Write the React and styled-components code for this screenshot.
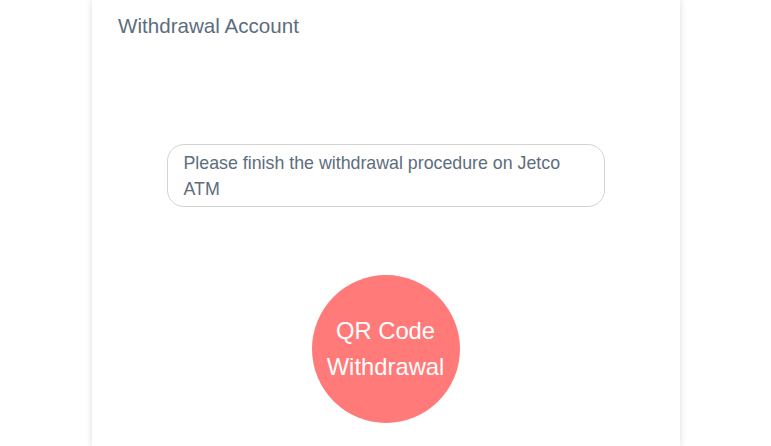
import React from "react";
import styled, { createGlobalStyle } from "styled-components";

const Global = createGlobalStyle`
  html, body { margin: 0; padding: 0; background: #ffffff; }
  body { font-family: "Liberation Sans", Arial, sans-serif; overflow: hidden; }
`;

const Page = styled.div`
  display: flex;
  justify-content: center;
  height: 446px;
  padding-left: 1px;
`;

const Card = styled.section`
  width: 588px;
  height: 100%;
  background: #ffffff;
  box-shadow: 0 0 7px rgba(0, 0, 0, 0.14);
  padding: 14px 26px 0 25px;
  box-sizing: border-box;
  display: flex;
  flex-direction: column;
  align-items: center;
`;

const Title = styled.h2`
  align-self: stretch;
  margin: 0 0 0 1px;
  font-size: 20.6px;
  font-weight: 400;
  line-height: 23px;
  color: #5d6d7d;
`;

const Notice = styled.div`
  margin-top: 107px;
  width: 438px;
  box-sizing: border-box;
  border: 1px solid #d3d3d3;
  border-radius: 17px;
  padding: 5px 16px 4px 16px;
  font-size: 17.8px;
  line-height: 26px;
  color: #5d6d7d;
`;

const QrButton = styled.button`
  margin-top: 68px;
  width: 148px;
  height: 148px;
  border-radius: 50%;
  border: none;
  background: #ff7a79;
  color: #ffffff;
  font-family: "Liberation Sans", Arial, sans-serif;
  font-size: 23.8px;
  line-height: 36px;
  display: flex;
  flex-direction: column;
  align-items: center;
  justify-content: center;
  padding: 0;
  cursor: pointer;
`;

export default function App() {
  return (
    <>
      <Global />
      <Page>
        <Card>
          <Title>Withdrawal Account</Title>
          <Notice>Please finish the withdrawal procedure on Jetco ATM</Notice>
          <QrButton>
            <span>QR Code</span>
            <span>Withdrawal</span>
          </QrButton>
        </Card>
      </Page>
    </>
  );
}
